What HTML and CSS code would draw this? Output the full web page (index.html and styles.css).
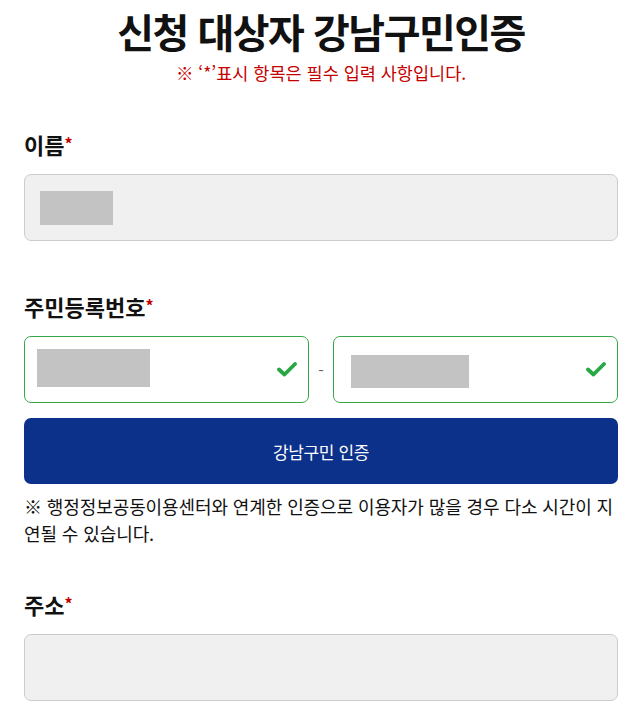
FILE: index.html
```html
<!DOCTYPE html>
<html lang="ko">
<head>
    <meta charset="UTF-8">
    <meta name="viewport" content="width=device-width, initial-scale=1.0">
    <title>강남구민인증</title>
    <link rel="stylesheet" href="styles.css">
</head>
<body>
    <div class="container">
        <h1 class="title">신청 대상자 강남구민인증</h1>
        <p class="required-note">※ ‘*’표시 항목은 필수 입력 사항입니다.</p>

        <div class="field first">
            <label class="label">이름<span class="star">*</span></label>
            <div class="input gray">
                <span class="mask mask-name"></span>
            </div>
        </div>

        <div class="field">
            <label class="label">주민등록번호<span class="star">*</span></label>
            <div class="rrn">
                <div class="input valid">
                    <span class="mask mask-front"></span>
                    <svg class="check" viewBox="0 0 20 15" width="20" height="15">
                        <path d="M2 7.5 L7.5 12.5 L18 2" fill="none" stroke="#28a745" stroke-width="3.8" stroke-linecap="round" stroke-linejoin="round"/>
                    </svg>
                </div>
                <span class="dash">-</span>
                <div class="input valid">
                    <span class="mask mask-back"></span>
                    <svg class="check" viewBox="0 0 20 15" width="20" height="15">
                        <path d="M2 7.5 L7.5 12.5 L18 2" fill="none" stroke="#28a745" stroke-width="3.8" stroke-linecap="round" stroke-linejoin="round"/>
                    </svg>
                </div>
            </div>
            <button class="btn-auth">강남구민 인증</button>
            <p class="info">※ 행정정보공동이용센터와 연계한 인증으로 이용자가 많을 경우 다소 시간이 지연될 수 있습니다.</p>
        </div>

        <div class="field last">
            <label class="label">주소<span class="star">*</span></label>
            <div class="input gray"></div>
        </div>
    </div>
</body>
</html>
```

FILE: styles.css
```css
body { margin: 0; font-family: "Noto Sans CJK KR", "Noto Sans", sans-serif; color: #111; background: #fff; }
.container { padding: 0 21px 0 24px; }
.title { margin: 0; padding-top: 5px; font-size: 40px; font-weight: 700; text-align: center; line-height: 52px; letter-spacing: -1.5px; }
.required-note { margin: 4px 0 0; text-align: center; color: #c40000; font-size: 17.5px; line-height: 24px; }
.field { margin-top: 50px; }
.field.first { margin-top: 44px; }
.field.last { margin-top: 42px; }
.label { display: block; font-size: 22px; font-weight: 700; line-height: 28px; margin-bottom: 16px; }
.star { color: #c40000; font-size: 16px; vertical-align: 4px; }
.input { height: 65px; border: 1px solid #ccc; border-radius: 7px; box-sizing: content-box; display: flex; align-items: center; padding: 0 13px 0 15px; }
.gray { background: #f0f0f0; }
.valid { flex: 1; border-color: #3aa64a; background: #fff; padding: 0 11px 0 12px; }
.mask { display: block; background: #c3c3c3; }
.mask-name { width: 73px; height: 34px; }
.mask-front { width: 113px; height: 38px; margin-top: -4px; }
.mask-back { width: 118px; height: 33px; margin-left: 5px; margin-top: 4px; }
.check { margin-left: auto; }
.rrn { display: flex; align-items: center; gap: 8px; }
.dash { color: #666; font-size: 16px; width: 8px; text-align: center; }
.btn-auth { display: block; width: 100%; height: 66px; margin-top: 15px; border: 0; border-radius: 7px; background: #0b318a; color: #fff; font-family: inherit; font-size: 17px; letter-spacing: -0.4px; }
.info { margin: 9px 0 0; font-size: 18px; line-height: 27px; letter-spacing: -0.1px; word-break: break-all; color: #111; }
```
